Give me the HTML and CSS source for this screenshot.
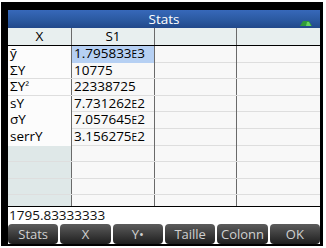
FILE: index.html
```html
<!DOCTYPE html>
<html lang="fr">
<head>
    <meta charset="UTF-8">
    <title>Stats</title>
    <meta name="viewport" content="width=device-width, initial-scale=1.0">
    <link rel="stylesheet" href="styles.css">
</head>
<body>
<div class="frame">
    <div class="screen">
        <div class="title">
            Stats
            <svg class="batt" width="12" height="6" viewBox="0 0 12 6">
                <polygon points="0,6 3,1 9,1 12,6" fill="#2e9a3a"/>
                <polygon points="6,6 7,2 9,2 11,6" fill="#66d45c"/>
            </svg>
        </div>
        <div class="sheet">
            <div class="row head"><div class="c">X</div><div class="c">S1</div><div class="c"></div><div class="c"></div></div>
            <div class="row"><div class="c lab">ȳ</div><div class="c sel">1.795833<span class="e">E</span>3</div><div class="c"></div><div class="c"></div></div>
            <div class="row"><div class="c lab">ΣY</div><div class="c">10775</div><div class="c"></div><div class="c"></div></div>
            <div class="row"><div class="c lab">ΣY<span class="sq">²</span></div><div class="c">22338725</div><div class="c"></div><div class="c"></div></div>
            <div class="row"><div class="c lab">sY</div><div class="c">7.731262<span class="e">E</span>2</div><div class="c"></div><div class="c"></div></div>
            <div class="row"><div class="c lab">σY</div><div class="c">7.057645<span class="e">E</span>2</div><div class="c"></div><div class="c"></div></div>
            <div class="row"><div class="c lab">serrY</div><div class="c">3.156275<span class="e">E</span>2</div><div class="c"></div><div class="c"></div></div>
            <div class="row"><div class="c lab empty"></div><div class="c"></div><div class="c"></div><div class="c"></div></div>
            <div class="row"><div class="c lab empty"></div><div class="c"></div><div class="c"></div><div class="c"></div></div>
            <div class="row"><div class="c lab empty"></div><div class="c"></div><div class="c"></div><div class="c"></div></div>
            <div class="row"><div class="c lab empty"></div><div class="c"></div><div class="c"></div><div class="c"></div></div>
        </div>
        <div class="entry">1795.83333333</div>
        <div class="menu">
            <div class="key">Stats</div>
            <div class="key">X</div>
            <div class="key">Y•</div>
            <div class="key">Taille</div>
            <div class="key">Colonn</div>
            <div class="key">OK</div>
        </div>
    </div>
</div>
</body>
</html>
```

FILE: styles.css
```css
body {
    margin: 0;
    background: #fff;
    font-family: "Open Sans", "DejaVu Sans", sans-serif;
}
.frame {
    margin: 2px 0 0 1px;
    width: 322px;
    height: 244px;
    box-sizing: border-box;
    padding: 8px 3px 2px 7px;
    background: #000;
}
.screen {
    width: 312px;
    height: 234px;
    background: #fff;
    display: flex;
    flex-direction: column;
    overflow: hidden;
}
.title {
    height: 18px;
    flex: none;
    background: linear-gradient(#3768ba, #2a589f 60%, #21488a);
    color: #fff;
    font-size: 13.5px;
    line-height: 18px;
    text-align: center;
    position: relative;
}
.batt {
    position: absolute;
    right: 8px;
    top: 10px;
}
.sheet {
    height: 178px;
    flex: none;
    overflow: hidden;
    border-bottom: 1px solid #000;
    background: #f8f8f8;
}
.row {
    display: grid;
    grid-template-columns: 64px 83px 82px 83px;
    height: 16.6px;
    box-sizing: border-box;
    border-bottom: 1px solid #dedede;
}
.row.head {
    height: 18px;
    background: #e8efef;
    border-bottom: 1px solid #000;
}
.c {
    border-right: 1px solid #6a6a6a;
    font-size: 13.5px;
    line-height: 15.6px;
    padding-left: 2px;
    color: #000;
    white-space: nowrap;
}
.c:last-child {
    border-right: none;
}
.head .c {
    text-align: center;
    padding-left: 0;
    line-height: 17px;
}
.lab {
    background: #fcfcfc;
}
.lab.empty {
    background: #dfe8e8;
}
.sel {
    background: #b6d0f3;
}
.e {
    font-size: 10px;
}
.sq {
    font-size: 11px;
    line-height: 0;
    vertical-align: 1px;
}
.entry {
    height: 17px;
    flex: none;
    font-size: 13.5px;
    line-height: 16px;
    padding-left: 1px;
    color: #111;
}
.menu {
    height: 20px;
    flex: none;
    display: grid;
    grid-template-columns: repeat(6, 1fr);
    gap: 2px;
    background: #fff;
}
.key {
    background: linear-gradient(#5c5c5c, #3a3a3a 55%, #1e1e1e);
    border-radius: 4px;
    color: #d0d0d0;
    font-size: 13px;
    line-height: 20px;
    text-align: center;
}
```
